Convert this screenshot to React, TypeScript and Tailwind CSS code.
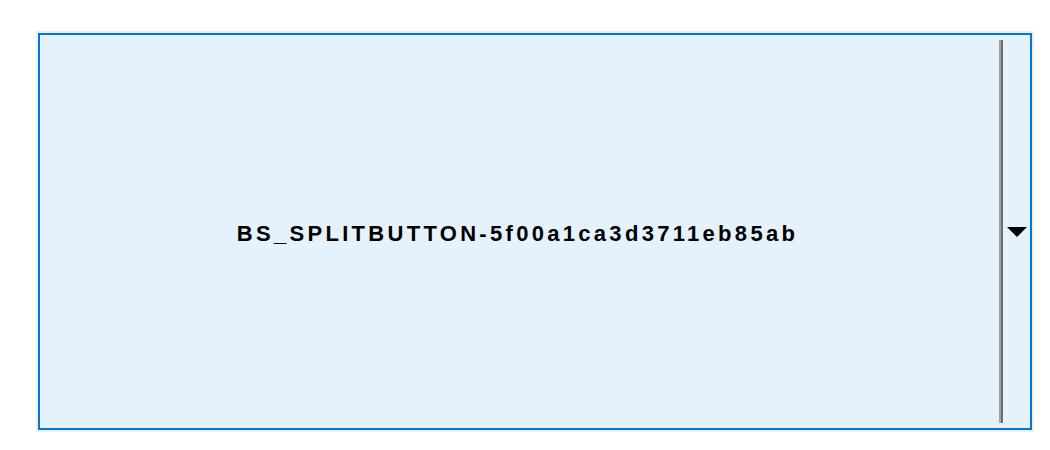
import React from 'react';

const App: React.FC = () => {
  return (
    <div className="w-[1050px] h-[450px] bg-white pt-[31px] pl-[36px]">
      {/* Focus frame */}
      <div className="w-[998px] h-[401px] border-2 border-[#efefef]">
        <div className="h-full border-2 border-[#0078d7] bg-[#e5f1fb] flex">
          {/* Main button */}
          <div className="flex-1 flex items-center justify-center pt-[4px] pr-[4px]">
            <span
              className="text-[22px] leading-none font-bold tracking-[3.3px] text-black"
              style={{ fontFamily: '"Liberation Sans", Arial, sans-serif' }}
            >
              BS_SPLITBUTTON-5f00a1ca3d3711eb85ab
            </span>
          </div>
          {/* Separator */}
          <div className="my-[5px] flex">
            <div className="w-[2px] bg-[#a0a0a0]" />
            <div className="w-[2px] bg-[#6d6d6d]" />
          </div>
          {/* Dropdown arrow */}
          <div className="w-[27px] flex items-center justify-center">
            <svg width="20" height="10" viewBox="0 0 20 10" className="ml-[1px]">
              <polygon points="0,0 20,0 10,10" fill="#000" />
            </svg>
          </div>
        </div>
      </div>
    </div>
  );
};

export default App;
